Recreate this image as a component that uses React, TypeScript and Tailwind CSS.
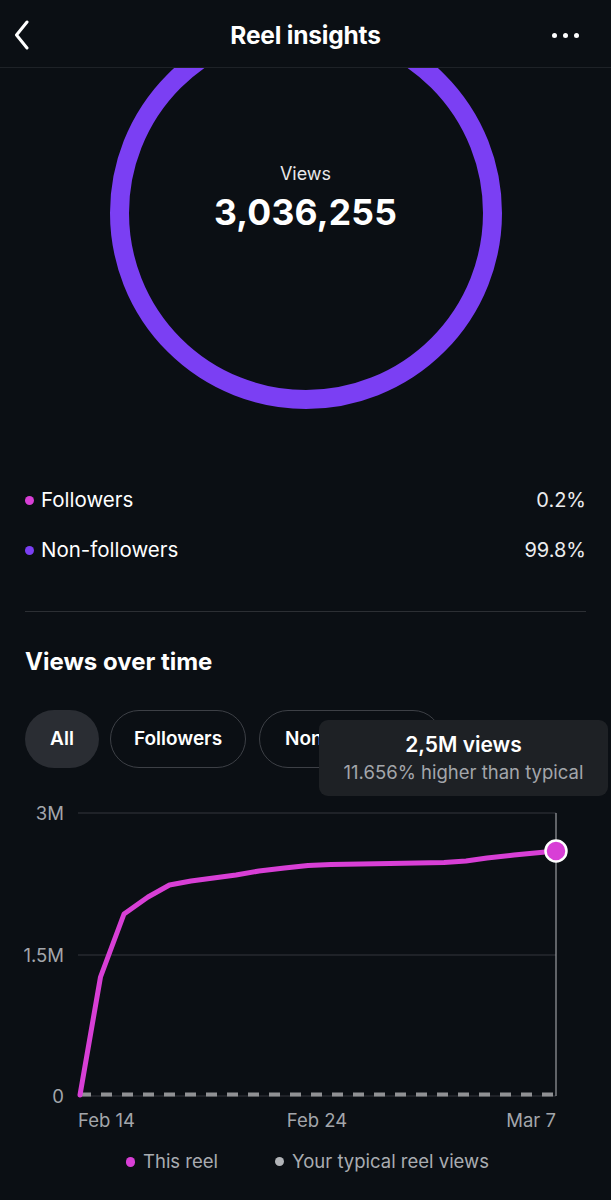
import React from 'react'

const line: [number, number][] = [
  [80, 1095], [100.5, 977], [124, 914], [148, 897], [169.5, 885], [191, 881],
  [236, 875], [259, 871], [284.5, 868], [308, 865.5], [331, 864.5], [390, 863.5],
  [444, 862.5], [466, 861], [487, 858], [514, 855], [556, 851],
]

const ViewsChart = () => {
  const pts = line.map(([x, y]) => `${x},${y}`).join(' ')
  return (
    <svg width="611" height="340" viewBox="0 798 611 340" className="block mt-[30px]">
      <line x1="78" y1="813" x2="556" y2="813" stroke="#34373c" strokeWidth="1" />
      <line x1="78" y1="955" x2="556" y2="955" stroke="#34373c" strokeWidth="1" />
      <line x1="78" y1="1096" x2="556" y2="1096" stroke="#34373c" strokeWidth="1" />
      <line x1="556" y1="813" x2="556" y2="1096" stroke="#9a9ca0" strokeWidth="1.2" />
      <line x1="80" y1="1094.5" x2="556" y2="1094.5" stroke="#909194" strokeWidth="4" strokeDasharray="11 10" />
      <polyline points={pts} fill="none" stroke="#d83fd6" strokeWidth="5" strokeLinejoin="round" strokeLinecap="round" />
      <circle cx="556" cy="851" r="10.5" fill="#d83fd6" stroke="#ffffff" strokeWidth="2.5" />
      <g fill="#a3a6ab" fontSize="18.5" fontFamily="Inter, sans-serif">
        <text x="64" y="813" textAnchor="end" dominantBaseline="central">3M</text>
        <text x="64" y="955" textAnchor="end" dominantBaseline="central">1.5M</text>
        <text x="64" y="1096" textAnchor="end" dominantBaseline="central">0</text>
        <text x="78" y="1120" dominantBaseline="central">Feb 14</text>
        <text x="317" y="1120" textAnchor="middle" dominantBaseline="central">Feb 24</text>
        <text x="556" y="1120" textAnchor="end" dominantBaseline="central">Mar 7</text>
      </g>
    </svg>
  )
}

export default function App() {
  return (
    <div className="relative w-[611px] h-[1200px] overflow-hidden bg-[#0b0f14] text-white font-['Inter',sans-serif]">
      {/* header */}
      <div className="relative z-10 grid grid-cols-[1fr_auto_1fr] items-center h-[68px] pt-[3px] px-[14px] border-b border-[#1e2227] bg-[#0b0f14]">
        <svg width="16" height="30" viewBox="0 0 16 30" className="justify-self-start">
          <path d="M13 2 L2.5 15 L13 28" fill="none" stroke="#ffffff" strokeWidth="3" strokeLinecap="round" strokeLinejoin="round" />
        </svg>
        <h1 className="text-[24.5px] font-bold tracking-[-0.2px]">Reel insights</h1>
        <div className="justify-self-end flex gap-[6px] pr-[18px]">
          <span className="w-[5px] h-[5px] rounded-full bg-white" />
          <span className="w-[5px] h-[5px] rounded-full bg-white" />
          <span className="w-[5px] h-[5px] rounded-full bg-white" />
        </div>
      </div>

      {/* total views ring */}
      <div className="relative h-[373px] overflow-hidden">
        <svg width="392" height="392" viewBox="0 0 392 392" className="absolute left-[110px] top-[-51px]">
          <circle cx="196" cy="196" r="186.5" fill="none" stroke="#7b3ff3" strokeWidth="19" />
        </svg>
        <div className="relative flex flex-col items-center pt-[94px]">
          <p className="text-[18px] leading-[24px] text-[#e8e8ea]">Views</p>
          <p className="text-[35.5px] leading-[42px] font-bold mt-[6px] tracking-[0.2px]">3,036,255</p>
        </div>
      </div>

      {/* audience split */}
      <div className="px-[25px] flex flex-col">
        <div className="flex items-center justify-between h-[50px] mt-[34px]">
          <div className="flex items-center gap-[7px]">
            <span className="w-[9px] h-[9px] rounded-full bg-[#d83fd6]" />
            <span className="text-[20.5px]">Followers</span>
          </div>
          <span className="text-[20px] text-[#ececee]">0.2%</span>
        </div>
        <div className="flex items-center justify-between h-[50px]">
          <div className="flex items-center gap-[7px]">
            <span className="w-[9px] h-[9px] rounded-full bg-[#7b3ff3]" />
            <span className="text-[20.5px]">Non-followers</span>
          </div>
          <span className="text-[20px] text-[#ececee]">99.8%</span>
        </div>
        <div className="h-px bg-[#2c2f34] mt-[36px]" />
        <h2 className="text-[24px] font-bold mt-[36px] leading-[28px]">Views over time</h2>
      </div>

      {/* filters */}
      <div className="flex gap-[11px] px-[25px] mt-[34px]">
        <button className="h-[58px] w-[74px] rounded-full bg-[#2a2d33] text-[19px] font-semibold">All</button>
        <button className="h-[58px] w-[136px] rounded-full border border-[#3d4046] text-[19px] font-semibold">Followers</button>
        <button className="h-[58px] px-[25px] ml-[2px] rounded-full border border-[#3d4046] text-[19px] font-semibold">Non-followers</button>
      </div>

      <ViewsChart />

      <div className="flex gap-[57px] pl-[126px] mt-[10px] text-[18.5px] text-[#a9acb1]">
        <div className="flex items-center gap-[8px]">
          <span className="w-[9px] h-[10px] rounded-full bg-[#d83fd6]" />
          <span>This reel</span>
        </div>
        <div className="flex items-center gap-[8px]">
          <span className="w-[9px] h-[9px] rounded-full bg-[#b2b4b8]" />
          <span>Your typical reel views</span>
        </div>
      </div>

      {/* tooltip */}
      <div className="absolute left-[319px] top-[720px] w-[289px] h-[76px] rounded-[9px] bg-[#1e2125] flex flex-col items-center justify-center">
        <p className="text-[21px] font-semibold leading-[26px]">2,5M views</p>
        <p className="text-[18.5px] text-[#a3a6ab] leading-[24px] mt-[2px]">11.656% higher than typical</p>
      </div>
    </div>
  )
}
